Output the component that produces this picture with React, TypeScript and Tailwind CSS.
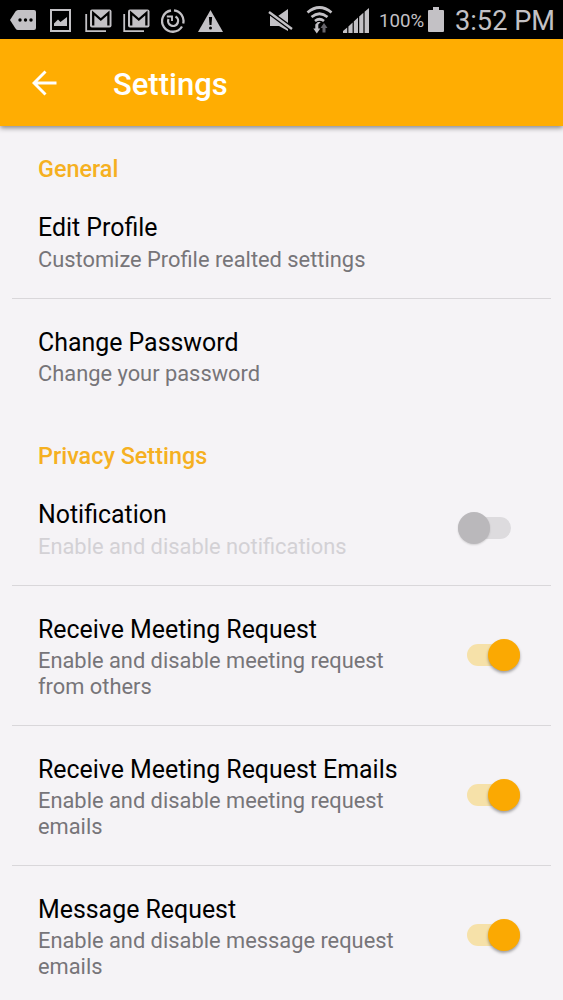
import React, { useState } from 'react';
import clsx from 'clsx';

interface Setting {
  id: string;
  title: string;
  summary: string;
  hasSwitch?: boolean;
}

const generalSettings: Setting[] = [
  { id: 'profile', title: 'Edit Profile', summary: 'Customize Profile realted settings' },
  { id: 'password', title: 'Change Password', summary: 'Change your password' },
];

const privacySettings: Setting[] = [
  { id: 'notification', title: 'Notification', summary: 'Enable and disable notifications', hasSwitch: true },
  { id: 'meeting', title: 'Receive Meeting Request', summary: 'Enable and disable meeting request from others', hasSwitch: true },
  { id: 'meetingEmails', title: 'Receive Meeting Request Emails', summary: 'Enable and disable meeting request emails', hasSwitch: true },
  { id: 'message', title: 'Message Request', summary: 'Enable and disable message request emails', hasSwitch: true },
];

function MailIcon() {
  return (
    <svg width="27" height="24" viewBox="0 0 27 24" fill="none">
      <path d="M1.2 5V22.2H21" stroke="#c3c1c5" strokeWidth="1.8" />
      <rect x="5" y="0.500" width="21.5" height="18" rx="2" fill="#c3c1c5" />
      <path d="M8.2 16.5V4L15.8 10.5L23.400 4V16.5" stroke="#000" strokeWidth="2.300" />
    </svg>
  );
}

function StatusBar() {
  return (
    <div className="flex h-[39px] shrink-0 items-center bg-black pl-[10px] text-[#c3c1c5]">
      <svg width="26" height="20" viewBox="0 0 26 20" fill="currentColor">
        <path d="M8 0H24Q26 0 26 2V18Q26 20 24 20H8Q6.500 20 5.500 18.500L0 10L5.500 1.500Q6.500 0 8 0Z" />
        <g fill="#000">
          <circle cx="10" cy="10" r="1.700" />
          <circle cx="15.500" cy="10" r="1.700" />
          <circle cx="21" cy="10" r="1.700" />
        </g>
      </svg>
      <svg className="ml-[14px] mt-[2px]" width="21" height="23" viewBox="0 0 21 23" fill="none">
        <rect x="1" y="1" width="19" height="21" stroke="currentColor" strokeWidth="2" />
        <path d="M4 17V14.500L8 10.500L10.500 13L17 8V17Z" fill="currentColor" />
      </svg>
      <div className="ml-[14px] mt-[2px] flex gap-[11px]">
        <MailIcon />
        <MailIcon />
      </div>
      <svg className="ml-[11px] mt-[2px]" width="24" height="24" viewBox="0 0 24 24" fill="none" stroke="currentColor">
        <path d="M13 1.300A10.700 10.700 0 0 1 22.200 14.500M21 17.500A10.700 10.700 0 1 1 10 1.500" strokeWidth="2.300" />
        <path d="M14.500 7.500A5 5 0 1 1 7.500 10" strokeWidth="2.300" />
        <path d="M5.800 7.500H11V12" strokeWidth="1.900" />
      </svg>
      <svg className="ml-[13px] mt-[2px]" width="25" height="22" viewBox="0 0 25 22">
        <path d="M12.500 0L25 22H0Z" fill="currentColor" />
        <path d="M10.900 7H14.100L13.500 15H11.500Z" fill="#000" />
        <circle cx="12.500" cy="18" r="1.500" fill="#000" />
      </svg>
      <svg className="ml-[45px] mt-[2px]" width="26" height="24" viewBox="0 0 26 24">
        <path d="M2 7H10L20 0V22L11 17H2Z" fill="currentColor" />
        <path d="M1 3L24 20" stroke="#000" strokeWidth="5" />
        <path d="M1 3L24 20" stroke="currentColor" strokeWidth="2.400" />
      </svg>
      <svg className="ml-[12px] mt-[1px]" width="27" height="28" viewBox="0 0 27 28" fill="none">
        <path d="M1.500 6.500Q13.500 -3.500 25.500 6.500M5.500 11Q13.500 4.500 21.500 11M9 15Q13.500 11.500 18 15" stroke="currentColor" strokeWidth="2.700" />
        <path d="M9.300 18.500L11.800 16H14.800L12.300 18.500V22.500H14.300L10.800 27.500L7.300 22.500H9.300Z" fill="currentColor" />
        <path d="M18 17L21.500 22H19.500V26.500H16.500V22H14.500Z" fill="#66646a" />
      </svg>
      <svg className="ml-[10px] mt-[2px]" width="26" height="25" viewBox="0 0 26 25" fill="currentColor">
        <path d="M0 23L4.200 19.500V25H0ZM5.400 18.500L9.600 14.500V25H5.400ZM10.800 13.500L15 9.500V25H10.800ZM16.200 8.500L20.400 4.800V25H16.200ZM21.600 3.800L26 0V25H21.600Z" />
      </svg>
      <span className="ml-[10px] mt-1 w-[49px] whitespace-nowrap text-[18.7px] leading-none">100%</span>
      <svg width="16" height="25" viewBox="0 0 16 25" fill="currentColor">
        <path d="M5 0H11V3H15Q16 3 16 4V24Q16 25 15 25H1Q0 25 0 24V4Q0 3 1 3H5Z" />
      </svg>
      <span className="ml-[11px] mt-[5px] whitespace-nowrap text-[27.2px] leading-none">3:52 PM</span>
    </div>
  );
}

function Switch({ checked, onChange }: { checked: boolean; onChange: () => void }) {
  return (
    <button
      role="switch"
      aria-checked={checked}
      onClick={onChange}
      className={clsx('flex h-8 w-[53px] shrink-0 items-center', checked ? 'mr-[43px]' : 'mr-[52px]')}
    >
      <span className={clsx('flex h-[22px] w-full items-center rounded-full', checked ? 'justify-end bg-[#f6e1a9]' : 'bg-[#dddbde]')}>
        <span
          className={clsx(
            'size-8 shrink-0 rounded-full',
            checked ? 'bg-[#fba902] shadow-[0_2px_3px_rgba(0,0,0,0.35)]' : 'bg-[#bab8bb] shadow-[0_1px_2px_rgba(0,0,0,0.15)]'
          )}
        />
      </span>
    </button>
  );
}

function SectionTitle({ children }: { children: React.ReactNode }) {
  return (
    <h2 className="flex h-[34px] items-center pt-[5px] pl-[38px] text-[23.4px] leading-none font-medium text-[#f5b021]">
      {children}
    </h2>
  );
}

export default function App() {
  const [enabled, setEnabled] = useState<Record<string, boolean>>({
    notification: false,
    meeting: true,
    meetingEmails: true,
    message: true,
  });

  const toggle = (id: string) => setEnabled((prev) => ({ ...prev, [id]: !prev[id] }));

  const renderRows = (settings: Setting[]) =>
    settings.map((item, index) => (
      <div key={item.id}>
        <div className="flex items-center justify-between">
          <div className="w-[412px] pt-[29px] pb-[25px] pl-[38px]">
            <h3 className="whitespace-nowrap text-[24.9px] leading-[30px] text-black">{item.title}</h3>
            <p
              className={clsx(
                'mt-[3.5px] mb-[0.5px] text-[21.85px] leading-[25.5px]',
                item.hasSwitch && !enabled[item.id] ? 'text-[#d3d1d5]' : 'text-[#777579]'
              )}
            >
              {item.summary}
            </p>
          </div>
          {item.hasSwitch && <Switch checked={enabled[item.id]} onChange={() => toggle(item.id)} />}
        </div>
        {index < settings.length - 1 && <div className="mx-3 h-px bg-[#d9d7da]" />}
      </div>
    ));

  return (
    <div className="flex h-[1000px] w-[563px] flex-col overflow-hidden bg-[#f5f3f6] font-['Roboto',sans-serif]">
      <StatusBar />

      {/* Toolbar */}
      <header className="z-10 flex h-[87px] shrink-0 items-center bg-[#ffad02] pl-8 text-white shadow-[0_2px_5px_rgba(0,0,0,0.45)]">
        <svg width="25" height="26" viewBox="0 0 25 26" fill="none" stroke="currentColor" strokeWidth="2.900">
          <path d="M24.500 13H2M13.500 1.500L2 13L13.500 24.500" />
        </svg>
        <h1 className="ml-14 mt-1 text-[31px] font-medium leading-none">Settings</h1>
      </header>

      <main className="flex flex-1 flex-col pt-6">
        <section>
          <SectionTitle>General</SectionTitle>
          {renderRows(generalSettings)}
        </section>
        <section className="pt-[25px]">
          <SectionTitle>Privacy Settings</SectionTitle>
          {renderRows(privacySettings)}
        </section>
      </main>
    </div>
  );
}
